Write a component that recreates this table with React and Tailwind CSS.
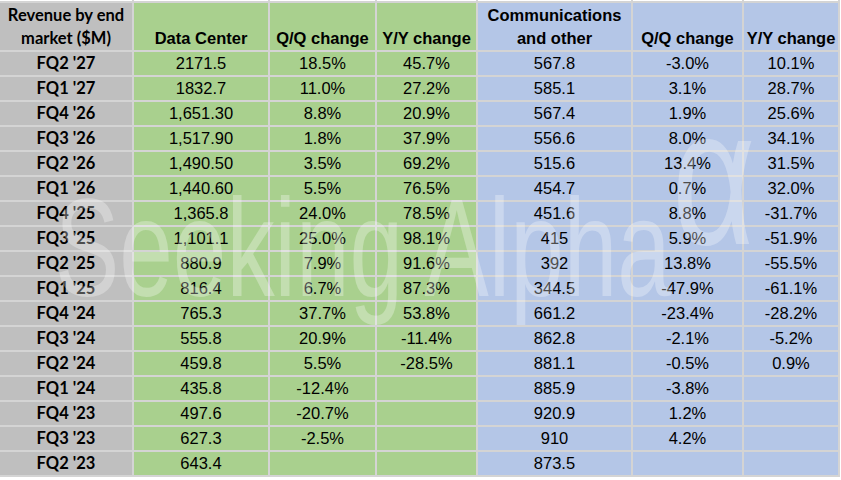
import React from "react";

const rows = [
  ["FQ2 '27", "2171.5", "18.5%", "45.7%", "567.8", "-3.0%", "10.1%"],
  ["FQ1 '27", "1832.7", "11.0%", "27.2%", "585.1", "3.1%", "28.7%"],
  ["FQ4 '26", "1,651.30", "8.8%", "20.9%", "567.4", "1.9%", "25.6%"],
  ["FQ3 '26", "1,517.90", "1.8%", "37.9%", "556.6", "8.0%", "34.1%"],
  ["FQ2 '26", "1,490.50", "3.5%", "69.2%", "515.6", "13.4%", "31.5%"],
  ["FQ1 '26", "1,440.60", "5.5%", "76.5%", "454.7", "0.7%", "32.0%"],
  ["FQ4 '25", "1,365.8", "24.0%", "78.5%", "451.6", "8.8%", "-31.7%"],
  ["FQ3 '25", "1,101.1", "25.0%", "98.1%", "415", "5.9%", "-51.9%"],
  ["FQ2 '25", "880.9", "7.9%", "91.6%", "392", "13.8%", "-55.5%"],
  ["FQ1 '25", "816.4", "6.7%", "87.3%", "344.5", "-47.9%", "-61.1%"],
  ["FQ4 '24", "765.3", "37.7%", "53.8%", "661.2", "-23.4%", "-28.2%"],
  ["FQ3 '24", "555.8", "20.9%", "-11.4%", "862.8", "-2.1%", "-5.2%"],
  ["FQ2 '24", "459.8", "5.5%", "-28.5%", "881.1", "-0.5%", "0.9%"],
  ["FQ1 '24", "435.8", "-12.4%", "", "885.9", "-3.8%", ""],
  ["FQ4 '23", "497.6", "-20.7%", "", "920.9", "1.2%", ""],
  ["FQ3 '23", "627.3", "-2.5%", "", "910", "4.2%", ""],
  ["FQ2 '23", "643.4", "", "", "873.5", "", ""],
];

const bgFor = (i) =>
  i === 0 ? "bg-[#bfbfbf]" : i <= 3 ? "bg-[#a9d08e]" : "bg-[#b4c6e7]";

const headers = [
  ["Revenue by end", "market ($M)"],
  ["Data Center"],
  ["Q/Q change"],
  ["Y/Y change"],
  ["Communications", "and other"],
  ["Q/Q change"],
  ["Y/Y change"],
];

export default function App() {
  return (
    <div className="relative w-[841px] h-[480px] bg-white overflow-hidden text-black">
      <div className="grid grid-cols-[134px_136px_107px_101px_155px_111px_96px] w-[840px]">
        {headers.map((_, i) => (
          <div
            key={"t" + i}
            className="h-[3px] bg-white border-r-2 border-b-2 border-[#d4d4d4]"
          />
        ))}
        {headers.map((lines, i) => (
          <div
            key={"h" + i}
            className={`h-[49px] border-r-2 border-b-2 border-[#d4d4d4] ${bgFor(i)} flex flex-col justify-end items-center text-center leading-[23px] font-bold ${
              i === 0
                ? "font-['Lato',sans-serif] text-[16.5px]"
                : "font-['Liberation_Sans',Arial,sans-serif] text-[16.5px]"
            }`}
          >
            {lines.map((l) => (
              <div key={l} className="whitespace-nowrap">
                {l}
              </div>
            ))}
          </div>
        ))}
        {rows.map((r, ri) =>
          r.map((c, ci) => (
            <div
              key={ri + "-" + ci}
              className={`h-[25px] border-r-2 border-b-2 border-[#d4d4d4] ${bgFor(ci)} text-center leading-[23px] whitespace-nowrap ${
                ci === 0
                  ? "font-['Lato',sans-serif] font-bold text-[16.5px]"
                  : "font-['Liberation_Sans',Arial,sans-serif] text-[16.5px]"
              }`}
            >
              {c}
            </div>
          ))
        )}
      </div>

      <div className="pointer-events-none absolute left-[55px] top-[178px] origin-left scale-x-[0.688] whitespace-nowrap font-['Liberation_Sans',Arial,sans-serif] text-[140px] leading-[140px] text-white/30">
        Seeking Alpha
      </div>
      <div className="pointer-events-none absolute left-[672px] top-[78px] origin-top-left scale-x-[0.85] scale-y-[1.15] font-['Liberation_Sans',Arial,sans-serif] text-[170px] leading-[170px] text-white/30">
        α
      </div>
    </div>
  );
}
